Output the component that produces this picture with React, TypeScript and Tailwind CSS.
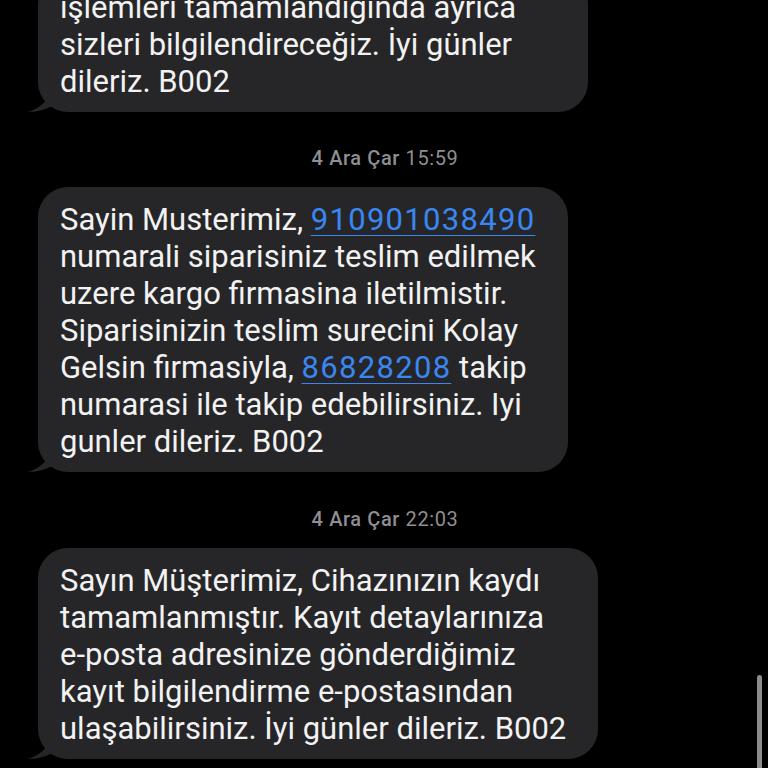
import type { ReactNode } from "react";

const FONT = { fontFamily: "Roboto, 'Liberation Sans', 'Noto Sans', sans-serif" };

function Tail() {
  return (
    <svg
      className="absolute -left-[10px] bottom-0"
      width="30"
      height="26"
      viewBox="0 0 30 26"
      fill="#262628"
    >
      <path d="M22 0 C22 10 18 20 0 26 C10 26 20 23 30 17 L30 0 Z" />
    </svg>
  );
}

function Bubble({
  lines,
  width,
  className = "",
}: {
  lines: ReactNode[];
  width: string;
  className?: string;
}) {
  return (
    <div className={`relative ml-[38px] ${width} ${className}`}>
      <div className="relative z-10 rounded-[30px] bg-[#262628] pl-[22px] pr-4 pt-[14px] pb-[12px]">
        {lines.map((l, i) => (
          <div key={i} className="whitespace-nowrap text-[31px] leading-[37px] text-[#f2f2f2]">
            {l}
          </div>
        ))}
      </div>
      <Tail />
    </div>
  );
}

function Stamp({ day, time, className = "" }: { day: string; time: string; className?: string }) {
  return (
    <div className={`text-center text-[20px] leading-[24px] tracking-[0.6px] text-[#8e8e93] ${className}`}>
      <span className="font-medium">{day}</span> {time}
    </div>
  );
}

function Link({ children }: { children: ReactNode }) {
  return (
    <span className="tracking-[1.3px] text-[#3a87f2] underline decoration-1 underline-offset-[5px]">
      {children}
    </span>
  );
}

export default function App() {
  return (
    <div className="relative h-[768px] w-[768px] overflow-hidden bg-black" style={FONT}>
      <Bubble
        width="w-[550px]"
        className="-mt-[25px]"
        lines={[
          "işlemleri tamamlandığında ayrıca",
          "sizleri bilgilendireceğiz. İyi günler",
          "dileriz. B002",
        ]}
      />

      <Stamp day="4 Ara Çar" time="15:59" className="mt-[34px] pl-[2px]" />

      <Bubble
        width="w-[530px]"
        className="mt-[17px]"
        lines={[
          <>
            Sayin Musterimiz, <Link>910901038490</Link>
          </>,
          "numarali siparisiniz teslim edilmek",
          "uzere kargo firmasina iletilmistir.",
          "Siparisinizin teslim surecini Kolay",
          <>
            Gelsin firmasiyla, <Link>86828208</Link> takip
          </>,
          "numarasi ile takip edebilirsiniz. Iyi",
          "gunler dileriz. B002",
        ]}
      />

      <Stamp day="4 Ara Çar" time="22:03" className="mt-[35px] pl-[2px]" />

      <Bubble
        width="w-[560px]"
        className="mt-[17px]"
        lines={[
          "Sayın Müşterimiz, Cihazınızın kaydı",
          "tamamlanmıştır. Kayıt detaylarınıza",
          "e-posta adresinize gönderdiğimiz",
          "kayıt bilgilendirme e-postasından",
          "ulaşabilirsiniz. İyi günler dileriz. B002",
        ]}
      />

      <div className="absolute left-[757px] top-[675px] h-[110px] w-[5px] rounded-full bg-[#8c8c8c]" />
    </div>
  );
}
